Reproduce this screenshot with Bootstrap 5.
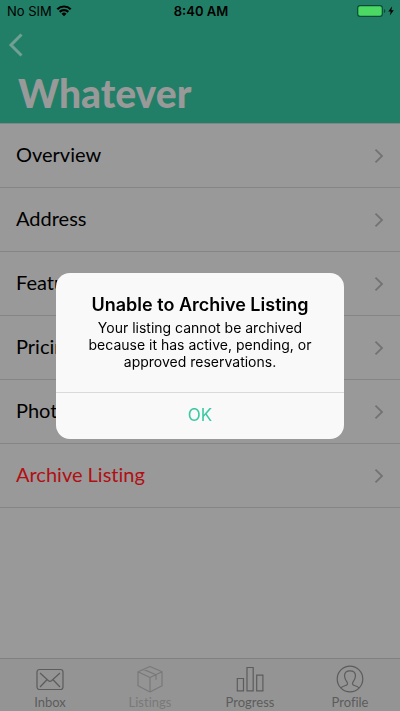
<!DOCTYPE html>
<html lang="en">
<head>
<meta charset="utf-8">
<meta name="viewport" content="width=device-width, initial-scale=1">
<title>Whatever</title>
<link href="https://cdn.jsdelivr.net/npm/bootstrap@5.3.0/dist/css/bootstrap.min.css" rel="stylesheet">
<style>
body { background: #999; color: #000; font-family: Lato, sans-serif; font-variant-ligatures: none; }
.top-area { background: #217f67; border-bottom: 1px solid #858585; }
.status-row { height: 22px; padding: 0 5px 0 7px; font: 13px/22px Inter, sans-serif; }
.status-row > * { flex: 1 1 0; }
.clock { font-weight: 600; }
.back-btn { display: block; padding: 11px 8px; border: 0; background: none; color: #729f93; line-height: 0; }
.page-title { font-size: 39px; line-height: 48px; font-weight: 900; color: #999; padding: 1px 18px 6px; }
.menu-list .list-group-item { height: 64px; padding: 0 16px; background: none; color: #000; border-color: #858585; font-size: 20px; border-width: 0 0 1px; }
.menu-list .list-group-item:last-child { border-bottom-width: 1px; }
.menu-list .list-group-item span { line-height: 24px; padding-bottom: 3px; }
.menu-list .list-group-item.danger-item { color: #b20f14; }
.chev { color: #737373; }
.tab-row { background: #949494; border-top: 1px solid #808080; height: 53px; }
.tab-link { color: #5c5c5c; font-size: 13px; line-height: 18px; padding-top: 6px; text-decoration: none; }
.tab-link.current { color: #797979; }
.alert-dialog { max-width: 288px; font-family: Inter, sans-serif; }
.alert-dialog .modal-content { background: #f9f9f9; border: 0; border-radius: 14px; color: #000; }
.alert-dialog .modal-body { padding: 21px 20px 22px; }
.alert-title { font-size: 18px; line-height: 22px; font-weight: 600; }
.alert-text { font-size: 14px; line-height: 17px; padding-top: 3px; }
.ok-btn { height: 47px; border: 0; border-top: 1px solid #dadada; background: none; color: #3cc9a2; font-size: 17px; }
</style>
</head>
<body>
<div class="d-flex flex-column min-vh-100">
  <header class="top-area">
    <div class="status-row d-flex align-items-center">
      <div class="d-flex align-items-center gap-1">
        <span>No SIM</span>
        <svg width="16" height="12" viewBox="-.5 0 16 12" aria-hidden="true"><g fill="none" stroke="#000" stroke-width="2.200"><path d="M.8 4.200a9.600 9.600 0 0 1 13.400 0"/><path d="M3.200 6.900a6.200 6.200 0 0 1 8.600 0"/></g><path d="M7.500 11.300 5 8.800a3.600 3.600 0 0 1 5 0z"/></svg>
      </div>
      <div class="clock text-center text-nowrap">8:40 AM</div>
      <div class="d-flex align-items-center justify-content-end">
        <svg width="39" height="14" viewBox="0 0 39 14" aria-hidden="true"><rect x="1.700" y="1.700" width="24.600" height="10.600" rx="2.400" fill="#4bd964" stroke="#0b4b38" stroke-width="1.200"/><path d="M28 5q1.400.4 1.400 2T28 9z" fill="#0b4b38"/><path d="M36.200 2.300 32.300 7.600h2.400l-.9 4 4-5.400h-2.500z"/></svg>
      </div>
    </div>
    <button class="back-btn" type="button" aria-label="Back"><svg width="16" height="24" viewBox="0 0 16 24" fill="none" stroke="currentColor" stroke-width="3"><path d="M13.500 1.500 3 12l10.500 10.500"/></svg></button>
    <h1 class="page-title mb-0">Whatever</h1>
  </header>
  <main class="flex-grow-1">
    <div class="menu-list list-group list-group-flush">
      <a href="#" class="list-group-item d-flex align-items-center justify-content-between"><span>Overview</span><svg class="chev" width="10" height="14" viewBox="0 0 10 14" fill="none" stroke="currentColor" stroke-width="1.800"><path d="M1.500.7 8 7l-6.500 6.300"/></svg></a>
      <a href="#" class="list-group-item d-flex align-items-center justify-content-between"><span>Address</span><svg class="chev" width="10" height="14" viewBox="0 0 10 14" fill="none" stroke="currentColor" stroke-width="1.800"><path d="M1.500.7 8 7l-6.500 6.300"/></svg></a>
      <a href="#" class="list-group-item d-flex align-items-center justify-content-between"><span>Features</span><svg class="chev" width="10" height="14" viewBox="0 0 10 14" fill="none" stroke="currentColor" stroke-width="1.800"><path d="M1.500.7 8 7l-6.500 6.300"/></svg></a>
      <a href="#" class="list-group-item d-flex align-items-center justify-content-between"><span>Pricing</span><svg class="chev" width="10" height="14" viewBox="0 0 10 14" fill="none" stroke="currentColor" stroke-width="1.800"><path d="M1.500.7 8 7l-6.500 6.300"/></svg></a>
      <a href="#" class="list-group-item d-flex align-items-center justify-content-between"><span>Photos</span><svg class="chev" width="10" height="14" viewBox="0 0 10 14" fill="none" stroke="currentColor" stroke-width="1.800"><path d="M1.500.7 8 7l-6.500 6.300"/></svg></a>
      <a href="#" class="list-group-item danger-item d-flex align-items-center justify-content-between"><span>Archive Listing</span><svg class="chev" width="10" height="14" viewBox="0 0 10 14" fill="none" stroke="currentColor" stroke-width="1.800"><path d="M1.500.7 8 7l-6.500 6.300"/></svg></a>
    </div>
  </main>
  <nav class="tab-row row g-0" aria-label="Main">
    <a href="#" class="tab-link col d-flex flex-column align-items-center"><svg width="28" height="28" viewBox="0 0 28 28" fill="none" stroke="currentColor" stroke-width="1.200"><rect x="1" y="4.500" width="26" height="20" rx="2.500"/><path d="m4 8 8.500 7.700q1.500 1.200 3 0L24 8M4 22l7.200-7.500M24 22l-7.200-7.500"/></svg><span>Inbox</span></a>
    <a href="#" class="tab-link current col d-flex flex-column align-items-center" aria-current="page"><svg width="28" height="28" viewBox="0 0 28 28" fill="none" stroke="currentColor" stroke-width="1.200" stroke-linejoin="round"><path d="m14 1.500 12 5.300v14L14 27 2 20.800v-14zM2 6.800 14 12.500l12-5.700M14 12.500V27M7.500 4.400l12.500 5.300v5"/></svg><span>Listings</span></a>
    <a href="#" class="tab-link col d-flex flex-column align-items-center"><svg width="28" height="28" viewBox="0 0 28 28" fill="none" stroke="currentColor" stroke-width="1.200"><path d="M1.300 13.500h6.200v12.300H1.300zM11 2.500h6.200v23.300H11zM20.700 10.200h6.200v15.600h-6.200z"/></svg><span>Progress</span></a>
    <a href="#" class="tab-link col d-flex flex-column align-items-center"><svg width="28" height="28" viewBox="0 0 28 28" fill="none" stroke="currentColor" stroke-width="1.200"><circle cx="14" cy="14" r="12.800"/><path d="M5 23c1-1.500 3-2 5-2.600 1.600-.5 1.800-1.800 1.200-3C9.800 15.500 8.500 13.500 8.500 10.800 8.500 7.500 10.500 5.800 14 5.800s5.500 1.700 5.500 5c0 2.700-1.300 4.700-2.700 6.600-.6 1.200-.4 2.500 1.200 3 2 .6 4 1.100 5 2.600"/></svg><span>Profile</span></a>
  </nav>
</div>

<div class="modal d-block" role="alertdialog" aria-modal="true" aria-labelledby="alertTitle" aria-describedby="alertText">
  <div class="alert-dialog modal-dialog modal-dialog-centered mx-auto">
    <div class="modal-content overflow-hidden">
      <div class="modal-body text-center">
        <h2 class="alert-title mb-0" id="alertTitle">Unable to Archive Listing</h2>
        <p class="alert-text mb-0" id="alertText">Your listing cannot be archived because it has active, pending, or approved reservations.</p>
      </div>
      <button class="ok-btn w-100" type="button">OK</button>
    </div>
  </div>
</div>
<script src="https://cdn.jsdelivr.net/npm/bootstrap@5.3.0/dist/js/bootstrap.bundle.min.js"></script>
</body>
</html>
